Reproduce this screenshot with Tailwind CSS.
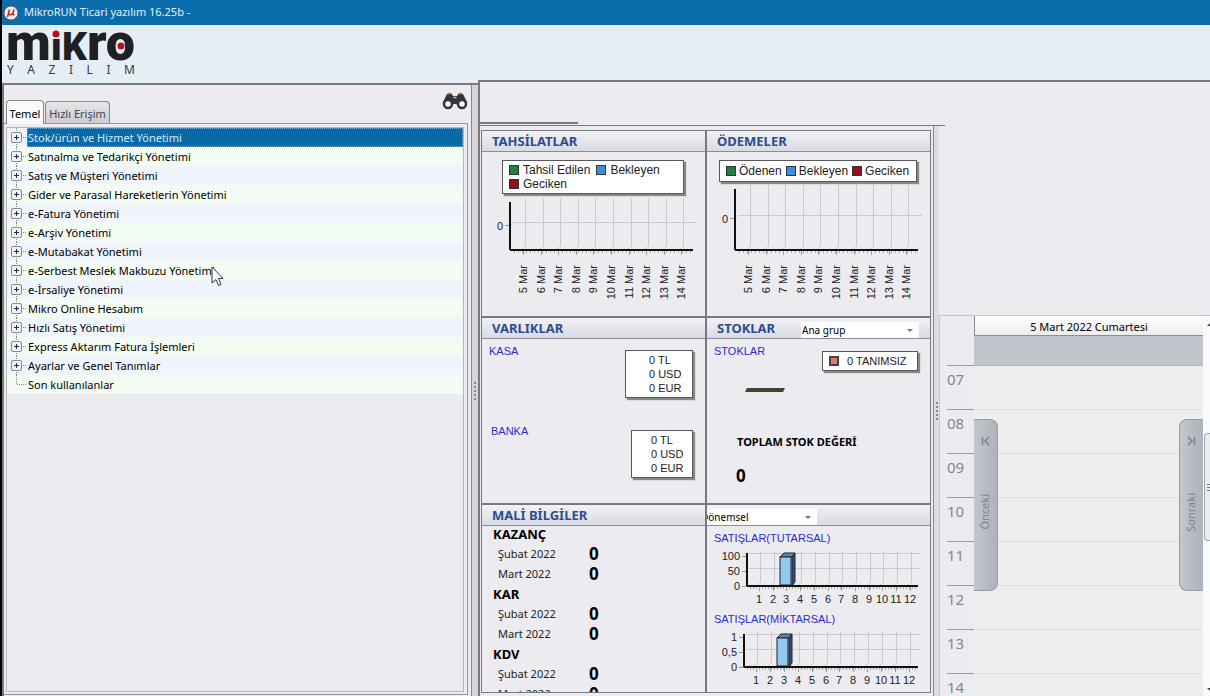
<!DOCTYPE html>
<html lang="tr">
<head>
    <meta charset="UTF-8">
    <meta name="viewport" content="width=device-width, initial-scale=1.0">
    <title>MikroRUN Ticari yazılım 16.25b</title>
    <script src="https://cdn.jsdelivr.net/npm/@tailwindcss/browser@4"></script>
</head>
<body class="h-screen overflow-hidden flex flex-col bg-[#ececf0] border-l-2 border-black font-['Noto_Sans',sans-serif] text-[11px] text-[#222]">
    <svg class="hidden">
        <symbol id="node" viewBox="0 0 20 19">
            <path d="M9.5 0v19M10 9.5h10" stroke="#888" stroke-dasharray="1 1" fill="none"/>
            <rect x="4.5" y="4.5" width="10" height="10" rx="1.5" fill="#f1f3f7" stroke="#858a94"/>
            <path d="M7 9.5h5M9.5 7v5" stroke="#222b4a"/>
        </symbol>
        <symbol id="leaf" viewBox="0 0 20 19">
            <path d="M9.5 0v9.5h10" stroke="#888" stroke-dasharray="1 1" fill="none"/>
        </symbol>
    </svg>

    <!-- Title bar -->
    <header class="h-[25px] shrink-0 flex items-center gap-[5px] pl-px bg-[#0a6cab] text-[#e4f0f8]">
        <svg class="size-4" viewBox="0 0 16 16">
            <circle cx="8" cy="8" r="7" fill="#f5eeee" stroke="#6d4b55"/>
            <path d="M6.5 4.5 4.5 12M6 8.500c0 2 3.500 1.500 4-.5l1-3.500M10.300 8c-.4 1.500 0 2 1 1.500" fill="none" stroke="#b3262c" stroke-width="1.500"/>
        </svg>
        <h1>MikroRUN Ticari yazılım 16.25b -</h1>
    </header>

    <div class="flex-1 min-h-0 flex">
        <!-- Menu side -->
        <aside class="w-[476px] shrink-0 flex flex-col">
            <div class="h-[60px] shrink-0 bg-[#e5edf5] border-b-2 border-[#77797f] pl-[5px] pt-1">
                <svg class="w-[130px] h-[34px] overflow-visible" viewBox="0 0 130 34">
                    <text x="-1" y="31" font-family="Roboto" font-weight="900" font-size="52" fill="#1f1f24">m<tspan font-size="39">ıK</tspan>ro</text>
                    <circle cx="49" cy="5" r="3.500" fill="#b5121b"/>
                    <circle cx="114" cy="17" r="3.500" fill="#b5121b"/>
                </svg>
                <div class="w-[128px] flex justify-between text-[12px] leading-[14px] text-[#3a3a40]">
                    <span>Y</span><span>A</span><span>Z</span><span>I</span><span>L</span><span>I</span><span>M</span>
                </div>
            </div>

            <div class="flex-1 min-h-0 flex border-l-2 border-[#77797f]">
                <div class="flex-1 flex flex-col min-w-0">
                    <div class="h-[39px] shrink-0 flex items-end pl-[2px] border-b border-[#92959c]">
                        <button class="h-6 w-[38px] -mb-px pt-1 rounded-t-sm border border-b-0 border-[#85878d] bg-[#fafafc] text-black text-center">Temel</button>
                        <button class="h-[22px] w-[65px] ml-px pt-1 rounded-t-sm border border-b-0 border-[#85878d] bg-linear-to-b from-[#e6e6e9] to-[#cbccd1] text-[#444]">Hızlı Erişim</button>
                        <button class="ml-auto mb-3" aria-label="Ara">
                            <svg class="w-[26px] h-5" viewBox="0 0 26 20">
                                <path d="M5 3 9 2l2 3h4l2-3 4 1 4 8-5 5-6-3h-2l-6 3-5-5z" fill="#33353a"/>
                                <path d="M6 2.500h3M17 2.500h3" stroke="#b58a5a" stroke-width="1.500"/>
                                <path d="M11.500 6.500h3" stroke="#c8c9ce" stroke-width="1.500"/>
                                <circle cx="6" cy="13" r="4" fill="#fafafa" stroke="#33353a" stroke-width="2.500"/>
                                <circle cx="20" cy="13" r="4" fill="#fafafa" stroke="#33353a" stroke-width="2.500"/>
                            </svg>
                        </button>
                    </div>
                    <div class="flex-1 min-h-0 mb-px border-r border-b border-[#92959c] p-[2px] pt-[3px] pr-[3px]">
                        <nav class="h-full border border-[#b4b6bc]">
                            <ul class="text-black">
                                <li class="h-[19px] flex bg-[#eff4fd]"><svg class="w-5 h-[19px]"><use href="#node"/></svg><a href="#" class="flex-1 leading-[17px] border border-dotted border-[#6fb0e0] bg-[#0a6aa8] text-[#d5eaf7]">Stok/ürün ve Hizmet Yönetimi</a></li>
                                <li class="h-[19px] flex bg-[#f3fcf2]"><svg class="w-5 h-[19px]"><use href="#node"/></svg><a href="#" class="flex-1 leading-[19px] pl-px">Satınalma ve Tedarikçi Yönetimi</a></li>
                                <li class="h-[19px] flex bg-[#eff4fd]"><svg class="w-5 h-[19px]"><use href="#node"/></svg><a href="#" class="flex-1 leading-[19px] pl-px">Satış ve Müşteri Yönetimi</a></li>
                                <li class="h-[19px] flex bg-[#f3fcf2]"><svg class="w-5 h-[19px]"><use href="#node"/></svg><a href="#" class="flex-1 leading-[19px] pl-px">Gider ve Parasal Hareketlerin Yönetimi</a></li>
                                <li class="h-[19px] flex bg-[#eff4fd]"><svg class="w-5 h-[19px]"><use href="#node"/></svg><a href="#" class="flex-1 leading-[19px] pl-px">e-Fatura Yönetimi</a></li>
                                <li class="h-[19px] flex bg-[#f3fcf2]"><svg class="w-5 h-[19px]"><use href="#node"/></svg><a href="#" class="flex-1 leading-[19px] pl-px">e-Arşiv Yönetimi</a></li>
                                <li class="h-[19px] flex bg-[#eff4fd]"><svg class="w-5 h-[19px]"><use href="#node"/></svg><a href="#" class="flex-1 leading-[19px] pl-px">e-Mutabakat Yönetimi</a></li>
                                <li class="h-[19px] flex bg-[#f3fcf2]"><svg class="w-5 h-[19px]"><use href="#node"/></svg><a href="#" class="flex-1 leading-[19px] pl-px">e-Serbest Meslek Makbuzu Yönetimi</a></li>
                                <li class="h-[19px] flex bg-[#eff4fd]"><svg class="w-5 h-[19px]"><use href="#node"/></svg><a href="#" class="flex-1 leading-[19px] pl-px">e-İrsaliye Yönetimi</a></li>
                                <li class="h-[19px] flex bg-[#f3fcf2]"><svg class="w-5 h-[19px]"><use href="#node"/></svg><a href="#" class="flex-1 leading-[19px] pl-px">Mikro Online Hesabım</a></li>
                                <li class="h-[19px] flex bg-[#eff4fd]"><svg class="w-5 h-[19px]"><use href="#node"/></svg><a href="#" class="flex-1 leading-[19px] pl-px">Hızlı Satış Yönetimi</a></li>
                                <li class="h-[19px] flex bg-[#f3fcf2]"><svg class="w-5 h-[19px]"><use href="#node"/></svg><a href="#" class="flex-1 leading-[19px] pl-px">Express Aktarım Fatura İşlemleri</a></li>
                                <li class="h-[19px] flex bg-[#eff4fd]"><svg class="w-5 h-[19px]"><use href="#node"/></svg><a href="#" class="flex-1 leading-[19px] pl-px">Ayarlar ve Genel Tanımlar</a></li>
                                <li class="h-[19px] flex bg-[#f3fcf2]"><svg class="w-5 h-[19px]"><use href="#leaf"/></svg><a href="#" class="flex-1 leading-[19px] pl-px">Son kullanılanlar</a></li>
                            </ul>
                        </nav>
                    </div>
                </div>
                <!-- Splitter -->
                <div class="w-[7px] ml-[3px] border-l border-[#85878d] bg-[#d5d6dc] flex items-center justify-center">
                    <div class="h-[18px] border-l-2 border-dotted border-[#85878d]"></div>
                </div>
            </div>
        </aside>

        <!-- Work area -->
        <main class="flex-1 min-w-0 flex flex-col">
            <div class="h-[57px] shrink-0 bg-[#e5edf5] border-b-2 border-[#77797f]"></div>
            <div class="h-11 w-[467px] shrink-0 border-l-2 border-b border-[#77797f] flex items-end">
                <div class="w-[98px] mb-px border-b-2 border-[#77797f]"></div>
            </div>

            <div class="flex-1 min-h-0 flex border-l-2 border-[#77797f]">
                <section class="shrink-0 pt-1 pb-[3px] pl-px pr-[2px] border-r border-[#85878d]">
                    <div class="h-full grid grid-cols-[223px_223px] grid-rows-[185px_185px_minmax(0,1fr)] gap-[2px] p-px bg-[#77797f]">

                        <div class="bg-[#ececf0] overflow-hidden">
                            <h2 class="h-[21px] pl-[10px] leading-5 border-b border-[#8b8d94] bg-linear-to-b from-[#f1f2f5] to-[#d8dbe4] text-[13px] font-bold text-[#2f4c8c]">TAHSİLATLAR</h2>
                            <div class="w-[182px] mt-2 ml-5 pl-[6px] py-[2px] flex flex-wrap gap-x-[6px] border border-[#55575c] bg-white shadow-[2px_2px_1px_#888] font-['Liberation_Sans',sans-serif] text-[12px] leading-[14px]">
                                <span class="flex items-center gap-1"><i class="size-[10px] border border-[#333] bg-[#1b8040]"></i>Tahsil Edilen</span>
                                <span class="flex items-center gap-1"><i class="size-[10px] border border-[#333] bg-[#3b8fd8]"></i>Bekleyen</span>
                                <span class="flex items-center gap-1"><i class="size-[10px] border border-[#333] bg-[#97101b]"></i>Geciken</span>
                            </div>
                            <svg id="tahsilat" class="w-[223px] h-[110px] font-['Liberation_Sans',sans-serif]"></svg>
                        </div>

                        <div class="bg-[#ececf0] overflow-hidden">
                            <h2 class="h-[21px] pl-[10px] leading-5 border-b border-[#8b8d94] bg-linear-to-b from-[#f1f2f5] to-[#d8dbe4] text-[13px] font-bold text-[#2f4c8c]">ÖDEMELER</h2>
                            <div class="w-[198px] mt-2 ml-3 pl-[6px] py-[2px] flex gap-x-1 border border-[#55575c] bg-white shadow-[2px_2px_1px_#888] font-['Liberation_Sans',sans-serif] text-[12px] leading-4">
                                <span class="flex items-center gap-[3px]"><i class="size-[10px] border border-[#333] bg-[#1b8040]"></i>Ödenen</span>
                                <span class="flex items-center gap-[3px]"><i class="size-[10px] border border-[#333] bg-[#3b8fd8]"></i>Bekleyen</span>
                                <span class="flex items-center gap-[3px]"><i class="size-[10px] border border-[#333] bg-[#97101b]"></i>Geciken</span>
                            </div>
                            <svg id="odeme" class="w-[223px] h-[122px] font-['Liberation_Sans',sans-serif]"></svg>
                        </div>

                        <div class="bg-[#ececf0] overflow-hidden">
                            <h2 class="h-[21px] pl-[10px] leading-5 border-b border-[#8b8d94] bg-linear-to-b from-[#f1f2f5] to-[#d8dbe4] text-[13px] font-bold text-[#2f4c8c]">VARLIKLAR</h2>
                            <div class="font-['Liberation_Sans',sans-serif] leading-[14px]">
                                <div class="h-20 flex justify-between items-start pl-[7px] pr-3 pt-[5px]">
                                    <a href="#" class="text-[#2b2bd0]">KASA</a>
                                    <ul class="w-[68px] mt-[6px] pl-[23px] py-[2px] border border-[#55575c] bg-white shadow-[2px_2px_1px_#888]">
                                        <li>0 TL</li><li>0 USD</li><li>0 EUR</li>
                                    </ul>
                                </div>
                                <div class="h-20 flex justify-between items-start pl-[9px] pr-3 pt-[5px]">
                                    <a href="#" class="text-[#2b2bd0]">BANKA</a>
                                    <ul class="w-[62px] mt-[6px] pl-[19px] py-[2px] border border-[#55575c] bg-white shadow-[2px_2px_1px_#888]">
                                        <li>0 TL</li><li>0 USD</li><li>0 EUR</li>
                                    </ul>
                                </div>
                            </div>
                        </div>

                        <div class="bg-[#ececf0] overflow-hidden">
                            <div class="h-[21px] pl-[10px] pr-[11px] flex justify-between items-end border-b border-[#8b8d94] bg-linear-to-b from-[#f1f2f5] to-[#d8dbe4]">
                                <h2 class="leading-5 text-[13px] font-bold text-[#2f4c8c]">STOKLAR</h2>
                                <div class="relative">
                                    <select aria-label="Stok grubu" class="block appearance-none w-[118px] h-4 pl-px bg-white text-[10px] leading-4 text-black"><option>Ana grup</option></select>
                                    <svg class="absolute right-[6px] top-[7px] w-[6px] h-[3px]" viewBox="0 0 6 3"><path d="M0 0h6L3 3z" fill="#777"/></svg>
                                </div>
                            </div>
                            <div class="flex justify-between items-start pt-[5px] pl-[7px] pr-3 leading-[14px] font-['Liberation_Sans',sans-serif]">
                                <a href="#" class="text-[#2b2bd0]">STOKLAR</a>
                                <div class="w-24 mt-[7px] h-5 flex items-center gap-2 pl-[6px] border border-[#55575c] bg-white shadow-[2px_2px_1px_#888]"><i class="size-[10px] border-2 border-[#4b4040] bg-[#d67a72]"></i>0 TANIMSIZ</div>
                            </div>
                            <svg class="ml-[38px] mt-[17px] w-10 h-1" viewBox="0 0 40 4"><path d="M2 0h38l-2 4H0z" fill="#45403a"/></svg>
                            <h3 class="ml-[30px] mt-[42px] leading-4 font-bold text-black">TOPLAM STOK DEĞERİ</h3>
                            <p class="ml-[29px] mt-[14px] text-[17px] leading-6 font-bold text-black">0</p>
                        </div>

                        <div class="bg-[#ececf0] overflow-hidden">
                            <h2 class="h-[21px] pl-[10px] leading-5 border-b border-[#8b8d94] bg-linear-to-b from-[#f1f2f5] to-[#d8dbe4] text-[13px] font-bold text-[#2f4c8c]">MALİ BİLGİLER</h2>
                            <table class="ml-[11px] -mt-[2px] text-left leading-5">
                                <tr><th colspan="2" class="h-5 p-0 text-[13px] leading-5 font-bold text-black">KAZANÇ</th></tr>
                                <tr><td class="h-5 p-0 pl-[5px] w-[96px]">Şubat 2022</td><td class="p-0 text-[17px] leading-5 font-bold text-black">0</td></tr>
                                <tr><td class="h-5 p-0 pl-[5px]">Mart 2022</td><td class="p-0 text-[17px] leading-5 font-bold text-black">0</td></tr>
                                <tr><th colspan="2" class="h-5 p-0 text-[13px] leading-5 font-bold text-black">KAR</th></tr>
                                <tr><td class="h-5 p-0 pl-[5px]">Şubat 2022</td><td class="p-0 text-[17px] leading-5 font-bold text-black">0</td></tr>
                                <tr><td class="h-5 p-0 pl-[5px]">Mart 2022</td><td class="p-0 text-[17px] leading-5 font-bold text-black">0</td></tr>
                                <tr><th colspan="2" class="h-5 p-0 text-[13px] leading-5 font-bold text-black">KDV</th></tr>
                                <tr><td class="h-5 p-0 pl-[5px]">Şubat 2022</td><td class="p-0 text-[17px] leading-5 font-bold text-black">0</td></tr>
                                <tr><td class="h-5 p-0 pl-[5px]">Mart 2022</td><td class="p-0 text-[17px] leading-5 font-bold text-black">0</td></tr>
                            </table>
                        </div>

                        <div class="bg-[#ececf0] overflow-hidden">
                            <div class="h-[21px] flex items-end border-b border-[#8b8d94] bg-linear-to-b from-[#f1f2f5] to-[#d8dbe4]">
                                <div class="relative">
                                    <select aria-label="Dönem" class="block appearance-none w-[110px] h-4 -indent-[6px] bg-white text-[10px] leading-4 text-black"><option>Dönemsel</option></select>
                                    <svg class="absolute right-[6px] top-[7px] w-[6px] h-[3px]" viewBox="0 0 6 3"><path d="M0 0h6L3 3z" fill="#777"/></svg>
                                </div>
                            </div>
                            <div class="pt-[5px] font-['Liberation_Sans',sans-serif] leading-[14px]">
                                <a href="#" class="block ml-[7px] text-[#2b2bd0]">SATIŞLAR(TUTARSAL)</a>
                                <svg id="tutar" class="w-[223px] h-[62px]"></svg>
                                <a href="#" class="block ml-[7px] mt-[5px] text-[#2b2bd0]">SATIŞLAR(MİKTARSAL)</a>
                                <svg id="miktar" class="w-[223px] h-[62px]"></svg>
                            </div>
                        </div>
                    </div>
                </section>

                <!-- Splitter -->
                <div class="w-[5px] shrink-0 bg-[#dcdde2] flex items-center justify-center">
                    <div class="h-[18px] border-l-2 border-dotted border-[#85878d]"></div>
                </div>

                <!-- Day view -->
                <section class="flex-1 min-w-0 mt-[189px] flex border-t border-l border-[#c5c6cc] overflow-hidden">
                    <ol class="w-[34px] shrink-0 pl-[7px] pt-[49px] text-[15px] leading-[26px] text-[#85878c]">
                        <li class="h-11 border-t border-[#9b9da5]">07</li>
                        <li class="h-11 border-t border-[#9b9da5]">08</li>
                        <li class="h-11 border-t border-[#9b9da5]">09</li>
                        <li class="h-11 border-t border-[#9b9da5]">10</li>
                        <li class="h-11 border-t border-[#9b9da5]">11</li>
                        <li class="h-11 border-t border-[#9b9da5]">12</li>
                        <li class="h-11 border-t border-[#9b9da5]">13</li>
                        <li class="h-11 border-t border-[#9b9da5]">14</li>
                    </ol>
                    <div class="relative flex-1 min-w-0 bg-[#eeeeef]">
                        <h2 class="h-5 text-center leading-[22px] border-l border-b border-[#8b8d94] bg-linear-to-b from-white to-[#ececef] text-black">5 Mart 2022 Cumartesi</h2>
                        <div class="h-[29px] bg-[#c1c4cb]"></div>
                        <div class="h-11 border-t border-[#b4b6bd]"></div>
                        <div class="h-11 border-t border-[#dedfe3]"></div>
                        <div class="h-11 border-t border-[#dedfe3]"></div>
                        <div class="h-11 border-t border-[#dedfe3]"></div>
                        <div class="h-11 border-t border-[#dedfe3]"></div>
                        <div class="h-11 border-t border-[#dedfe3]"></div>
                        <div class="h-11 border-t border-[#dedfe3]"></div>
                        <div class="h-11 border-t border-[#dedfe3]"></div>
                        <button class="absolute left-0 top-[103px] w-6 h-[172px] pt-4 pb-[60px] flex flex-col items-center justify-between rounded-r-lg border border-l-0 border-[#9a9da5] bg-linear-to-r from-[#c3c6cd] to-[#adb2bb] text-[#80848c]">
                            <svg class="w-[9px] h-[10px]" viewBox="0 0 9 10"><path d="M1.500 1v8M8 1 4 5l4 4" fill="none" stroke="#7c8088" stroke-width="1.500"/></svg>
                            <span class="[writing-mode:vertical-rl] rotate-180">Önceki</span>
                        </button>
                        <button class="absolute right-0 top-[103px] w-6 h-[172px] pt-4 pb-[58px] flex flex-col items-center justify-between rounded-l-lg border border-r-0 border-[#9a9da5] bg-linear-to-r from-[#c3c6cd] to-[#adb2bb] text-[#80848c]">
                            <svg class="w-[9px] h-[10px]" viewBox="0 0 9 10"><path d="M7.500 1v8M1 1l4 4-4 4" fill="none" stroke="#7c8088" stroke-width="1.500"/></svg>
                            <span class="[writing-mode:vertical-rl] rotate-180">Sonraki</span>
                        </button>
                    </div>
                    <!-- Scrollbar -->
                    <div class="w-[7px] shrink-0 flex flex-col bg-[#fafafc] overflow-hidden">
                        <svg class="w-[7px] h-[117px] shrink-0" viewBox="0 0 7 117"><path d="M4 10l4-4v4z" fill="#444"/></svg>
                        <div class="h-[108px] shrink-0 ml-px border border-r-0 border-[#a2a4ab] rounded-l-sm bg-[#ececef] flex items-center justify-end">
                            <svg class="w-[3px] h-[7px]" viewBox="0 0 3 7"><path d="M0 .5h3M0 3.500h3M0 6.500h3" stroke="#777"/></svg>
                        </div>
                        <svg class="w-[7px] h-[10px] mt-auto shrink-0" viewBox="0 0 7 10"><path d="M4 2h4v4z" fill="#444"/></svg>
                    </div>
                </section>
            </div>
        </main>
    </div>

    <!-- Mouse pointer -->
    <svg class="absolute left-[211px] top-[266px] w-[13px] h-[21px]" viewBox="0 0 13 21">
        <path d="M1 1v16l4-3.500 2.500 6 2.500-1-2.500-6H12z" fill="#fff" stroke="#333"/>
    </svg>

    <script>
        function line(x1, y1, x2, y2, color, width) {
            return `<path d="M${x1} ${y1}L${x2} ${y2}" stroke="${color}" stroke-width="${width || 1}" fill="none"/>`;
        }

        function label(x, y, text, anchor, extra) {
            return `<text x="${x}" y="${y}" font-size="11" fill="#222" text-anchor="${anchor}" ${extra || ''}>${text}</text>`;
        }

        // Chart with an empty series, one slot per day
        function drawDays(id, left, top, bottom, zero) {
            let out = '';
            for (let i = 0; i < 10; i++) {
                const x = Math.round(left + 13 + i * 17.6);
                out += `<path d="M${x + 2.5} ${top - 4}V${bottom - 4}l-3 3" stroke="#c9cad0" fill="none"/>`;
                out += line(x + 0.5, bottom, x + 0.5, bottom + 5, '#999');
                out += label(x + 4, bottom + 15, `${i + 5} Mar`, 'end', `transform="rotate(-90 ${x + 4} ${bottom + 15})"`);
            }
            for (let x = left + 4; x < left + 183; x += 4) {
                out += line(x + 0.5, bottom, x + 0.5, bottom + 3, '#aaa');
            }
            out += `<path d="M${left} ${zero + 0.5}l3-3H${left + 187}" stroke="#c9cad0" fill="none"/>`;
            out += line(left - 5, zero + 0.5, left, zero + 0.5, '#999');
            out += label(left - 7, zero + 5, '0', 'end');
            out += line(left, top, left, bottom, '#111', 2);
            out += line(left, bottom, left + 183, bottom, '#111', 2);
            document.getElementById(id).innerHTML = out;
        }

        // Monthly sales with one filled month
        function drawMonths(id, left, step, top, bottom, ticks) {
            let out = '';
            const mid = Math.round((top + bottom) / 2) - 2;
            out += line(left + 2, top + 0.5, 213, top + 0.5, '#c9cad0');
            out += line(left + 2, mid + 0.5, 213, mid + 0.5, '#c9cad0');
            for (let i = 0; i < 12; i++) {
                const x = Math.round(left + 12 + i * step);
                out += `<path d="M${x + 1.5} ${top - 2}V${bottom - 4}l-3 3" stroke="#c9cad0" fill="none"/>`;
                out += line(x + 0.5, bottom, x + 0.5, bottom + 5, '#999');
                out += label(x, bottom + 17, i + 1, 'middle');
            }
            for (let x = left + 3; x < 211; x += 3) {
                out += line(x + 0.5, bottom, x + 0.5, bottom + 3, '#aaa');
            }
            const bx = left + 33;
            out += `<path d="M${bx} ${top + 4}l4-4h11l-3 4z" fill="#5e88b0" stroke="#222"/>`;
            out += `<path d="M${bx + 12} ${top + 4}l3-4v${bottom - top - 4}l-3 4z" fill="#2e4f8c" stroke="#222"/>`;
            out += `<rect x="${bx}" y="${top + 4}" width="11" height="${bottom - top - 5}" fill="#92c9f2" stroke="#222"/>`;
            ticks.forEach((text, i) => {
                const y = Math.round(top + 3 + i * (bottom - top - 3) / 2);
                out += line(left - 5, y + 0.5, left, y + 0.5, '#999');
                out += label(left - 7, y + 4, text, 'end');
            });
            out += line(left, top, left, bottom, '#111', 2);
            out += line(left, bottom, 211, bottom, '#111', 2);
            document.getElementById(id).innerHTML = out;
        }

        drawDays('tahsilat', 28, 8, 56, 31);
        drawDays('odeme', 28, 7, 68, 36);
        drawMonths('tutar', 40, 13.7, 8, 41, ['100', '50', '0']);
        drawMonths('miktar', 37, 13.9, 8, 41, ['1', '0,5', '0']);
    </script>
</body>
</html>
